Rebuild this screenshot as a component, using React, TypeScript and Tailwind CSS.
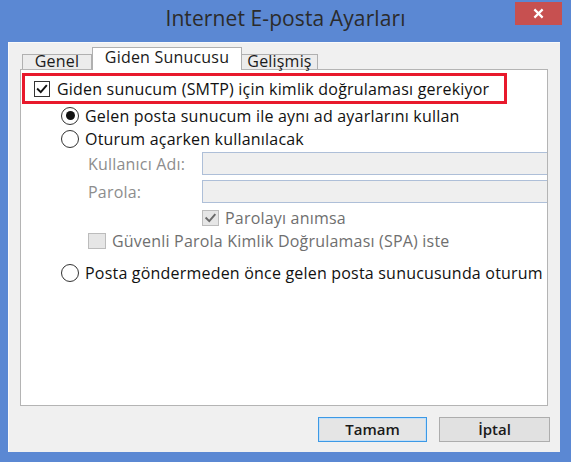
import React from "react";

const font = { fontFamily: '"Open Sans", "Noto Sans", sans-serif' };

function Check({ color = "#111" }: { color?: string }) {
  return (
    <svg viewBox="0 0 16 16" className="w-full h-full">
      <path d="M3.2 8.2 L6.6 11.6 L12.8 4.4" fill="none" stroke={color} strokeWidth="2.2" strokeLinecap="square" />
    </svg>
  );
}

function Radio({ checked }: { checked?: boolean }) {
  return (
    <div className="w-[18px] h-[18px] rounded-full border border-[#333] bg-white flex items-center justify-center shrink-0">
      {checked && <div className="w-[9px] h-[9px] rounded-full bg-[#111]" />}
    </div>
  );
}

export default function App() {
  return (
    <div className="w-[571px] h-[462px] bg-[#5b88d3] flex flex-col overflow-hidden" style={font}>
      {/* Title bar */}
      <div className="relative h-[42px] shrink-0 flex items-center justify-center">
        <span className="text-[21px] text-[#2b2b2b] pb-[4px] tracking-[0.1px]">Internet E-posta Ayarları</span>
        <div className="absolute right-[9px] top-[2px] w-[47px] h-[23px] bg-[#c75050] flex items-center justify-center">
          <svg viewBox="0 0 12 12" className="w-[11px] h-[11px]">
            <path d="M1.5 1.5 L10.5 10.5 M10.5 1.5 L1.5 10.5" stroke="white" strokeWidth="2.4" />
          </svg>
        </div>
      </div>
      {/* Client */}
      <div className="ml-[8px] mr-[11px] h-[410px] bg-[#f0f0f0] border-l border-t border-[#fafafa] flex flex-col">
        {/* Tabs */}
        <div className="flex items-end h-[22px] pl-[13px] mt-[4px] relative z-10 text-[16px] tracking-[0.2px] text-[#1a1a1a] font-medium">
          <div className="h-[15px] w-[70px] border border-b-0 border-[#b0b0b0] bg-[#ececec] flex items-start justify-center">
            <span className="leading-[16px] -mt-[2px]">Genel</span>
          </div>
          <div className="h-[23px] w-[150px] border border-b-0 border-[#b0b0b0] bg-white flex items-start justify-center -mb-[1px]">
            <span className="leading-[16px] mt-[1px]">Giden Sunucusu</span>
          </div>
          <div className="h-[15px] w-[76px] border border-b-0 border-l-0 border-[#b0b0b0] bg-[#ececec] flex items-start justify-center">
            <span className="leading-[16px] -mt-[2px]">Gelişmiş</span>
          </div>
        </div>
        {/* Panel */}
        <div className="ml-[11px] mr-[12px] h-[337px] bg-white border border-[#b4b4b4] overflow-hidden flex flex-col text-[16px] tracking-[0.2px] text-[#111] font-medium whitespace-nowrap">
          <div className="mt-[3px] ml-[1px] w-[485px] h-[31px] border-[3px] border-[#e8192c] flex items-center pl-[9px] shrink-0">
            <div className="w-[16px] h-[16px] border border-[#333] bg-white shrink-0">
              <Check />
            </div>
            <span className="ml-[7px]">Giden sunucum (SMTP) için kimlik doğrulaması gerekiyor</span>
          </div>
          <div className="h-[23px] flex items-center pl-[40px] shrink-0">
            <Radio checked />
            <span className="ml-[6px]">Gelen posta sunucum ile aynı ad ayarlarını kullan</span>
          </div>
          <div className="h-[23px] flex items-center pl-[40px] shrink-0">
            <Radio />
            <span className="ml-[6px]">Oturum açarken kullanılacak</span>
          </div>
          <div className="mt-[2px] h-[23px] flex items-center pl-[67px] shrink-0">
            <span className="w-[114px] shrink-0 text-[#8d8d8d] font-normal">Kullanıcı Adı:</span>
            <div className="h-[23px] w-[400px] border border-[#aebfd8] bg-[#efefef] shrink-0" />
          </div>
          <div className="mt-[5px] h-[23px] flex items-center pl-[67px] shrink-0">
            <span className="w-[114px] shrink-0 text-[#8d8d8d] font-normal">Parola:</span>
            <div className="h-[23px] w-[400px] border border-[#aebfd8] bg-[#efefef] shrink-0" />
          </div>
          <div className="mt-[6px] h-[17px] flex items-center pl-[181px] shrink-0">
            <div className="w-[17px] h-[16px] border border-[#bcbcbc] bg-[#e6e6e6] shrink-0">
              <Check color="#6a6a6a" />
            </div>
            <span className="ml-[6px] text-[#6f6f6f] font-normal">Parolayı anımsa</span>
          </div>
          <div className="mt-[6px] h-[17px] flex items-center pl-[67px] shrink-0">
            <div className="w-[18px] h-[16px] border border-[#bcbcbc] bg-[#e6e6e6] shrink-0" />
            <span className="ml-[6px] text-[#6f6f6f] font-normal">Güvenli Parola Kimlik Doğrulaması (SPA) iste</span>
          </div>
          <div className="mt-[14px] h-[20px] flex items-center pl-[40px] shrink-0">
            <Radio />
            <span className="ml-[6px]">Posta göndermeden önce gelen posta sunucusunda oturum aç</span>
          </div>
        </div>
        {/* Buttons */}
        <div className="flex justify-end gap-[12px] mr-[10px] mt-[11px]">
          <button className="w-[109px] h-[25px] border border-[#3c99e6] bg-[#e5e5e5] text-[15px] text-[#1a1a1a] font-semibold leading-none shadow-[inset_0_0_0_1px_#c5dff5]" style={font}>
            Tamam
          </button>
          <button className="w-[111px] h-[25px] border border-[#adadad] bg-[#e1e1e1] text-[15px] text-[#1a1a1a] font-semibold leading-none" style={font}>
            İptal
          </button>
        </div>
      </div>
    </div>
  );
}
